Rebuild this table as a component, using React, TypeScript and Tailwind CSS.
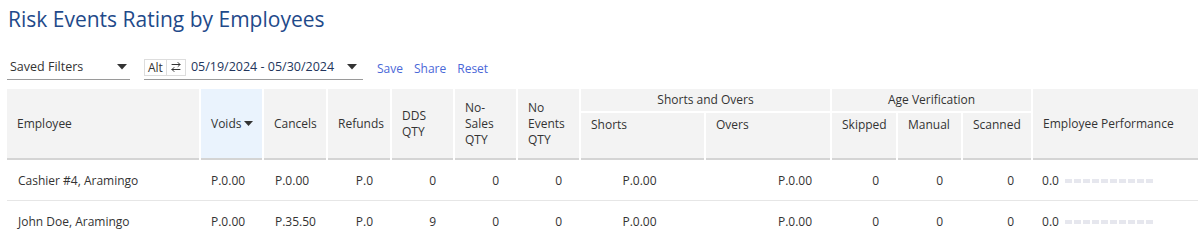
import React from "react";
import { ArrowRightLeft } from "lucide-react";

const font = { fontFamily: '"Open Sans", "Liberation Sans", sans-serif' };

type Row = {
  name: string;
  voids: string;
  cancels: string;
  refunds: string;
  dds: string;
  nosales: string;
  noevents: string;
  shorts: string;
  overs: string;
  skipped: string;
  manual: string;
  scanned: string;
  perf: string;
};

const rows: Row[] = [
  { name: "Cashier #4, Aramingo", voids: "P.0.00", cancels: "P.0.00", refunds: "P.0", dds: "0", nosales: "0", noevents: "0", shorts: "P.0.00", overs: "P.0.00", skipped: "0", manual: "0", scanned: "0", perf: "0.0" },
  { name: "John Doe, Aramingo", voids: "P.0.00", cancels: "P.35.50", refunds: "P.0", dds: "9", nosales: "0", noevents: "0", shorts: "P.0.00", overs: "P.0.00", skipped: "0", manual: "0", scanned: "0", perf: "0.0" },
];

function Caret() {
  return (
    <svg width="10" height="6" viewBox="0 0 10 6" className="shrink-0">
      <path d="M0 0 L10 0 L5 5.5 Z" fill="#333" />
    </svg>
  );
}

function Bar() {
  return (
    <div className="flex gap-[2px] ml-[6px]">
      {Array.from({ length: 10 }).map((_, i) => (
        <div key={i} className="w-[7px] h-[4px] bg-[#e6e7ee]" />
      ))}
    </div>
  );
}

export default function App() {
  const th = "font-normal text-left align-middle border-r-2 border-white px-[10px]";
  return (
    <div className="w-[1198px] h-[249px] overflow-hidden bg-white text-[#333]" style={font}>
      <h1 className="pl-[8px] pt-[4px] text-[21px] leading-[30px] text-[#1f4a8a]">Risk Events Rating by Employees</h1>
      <div className="flex items-end pl-[7px] mt-[21px] h-[25px] text-[12.5px]">
        <div className="w-[123px] h-[25px] border-b border-[#9a9a9a] flex items-center justify-between pl-[3px] pr-[3px]">
          <span>Saved Filters</span>
          <Caret />
        </div>
        <div className="ml-[14px] w-[219px] h-[25px] border-b border-[#9a9a9a] flex items-center pr-[6px]">
          <div className="flex items-center border border-[#ddd] h-[17px]">
            <span className="px-[3px] text-[12px] leading-[15px] text-[#333] border-r border-[#ddd]">Alt</span>
            <span className="px-[3px] flex items-center">
              <ArrowRightLeft size={12} strokeWidth={2} color="#333" />
            </span>
          </div>
          <span className="ml-[5px] text-[#23355c]">05/19/2024 - 05/30/2024</span>
          <span className="ml-auto"><Caret /></span>
        </div>
        <div className="flex gap-[11px] ml-[14px] mb-[2px] text-[12px] text-[#4a68d8]">
          <span>Save</span>
          <span>Share</span>
          <span>Reset</span>
        </div>
      </div>
      <div className="pl-[7px] mt-[9px]">
        <table className="table-fixed border-collapse w-[1191px] text-[12px] leading-[16px]">
          <colgroup>
            <col className="w-[193px]" />
            <col className="w-[63px]" />
            <col className="w-[64px]" />
            <col className="w-[64px]" />
            <col className="w-[63px]" />
            <col className="w-[63px]" />
            <col className="w-[63px]" />
            <col className="w-[125px]" />
            <col className="w-[126px]" />
            <col className="w-[66px]" />
            <col className="w-[65px]" />
            <col className="w-[70px]" />
            <col className="w-[166px]" />
          </colgroup>
          <thead className="bg-[#f3f3f3] text-[#333]">
            <tr className="h-[23px]">
              <th rowSpan={2} className={th}>Employee</th>
              <th rowSpan={2} className={`${th} bg-[#eaf3fd]`}>
                <span className="inline-flex items-center gap-[3px]">Voids
                  <svg width="9" height="5" viewBox="0 0 9 5"><path d="M0 0 L9 0 L4.5 5 Z" fill="#333" /></svg>
                </span>
              </th>
              <th rowSpan={2} className={th}>Cancels</th>
              <th rowSpan={2} className={th}>Refunds</th>
              <th rowSpan={2} className={th}>DDS<br />QTY</th>
              <th rowSpan={2} className={th}>No-<br />Sales<br />QTY</th>
              <th rowSpan={2} className={th}>No<br />Events<br />QTY</th>
              <th colSpan={2} className="font-normal text-center border-r-2 border-b-2 border-white">Shorts and Overs</th>
              <th colSpan={3} className="font-normal text-center border-r-2 border-b-2 border-white">Age Verification</th>
              <th rowSpan={2} className="font-normal text-left px-[10px]">Employee Performance</th>
            </tr>
            <tr className="h-[47px] border-b-2 border-[#d4d4d4]">
              <th className={`${th} align-top pt-[4px]`}>Shorts</th>
              <th className={`${th} align-top pt-[4px]`}>Overs</th>
              <th className={`${th} align-top pt-[4px]`}>Skipped</th>
              <th className={`${th} align-top pt-[4px]`}>Manual</th>
              <th className={`${th} align-top pt-[4px]`}>Scanned</th>
            </tr>
          </thead>
          <tbody>
            {rows.map((r, i) => {
              const td = `px-[18px] pt-[3px] h-[41px] ${i < rows.length - 1 ? "border-b border-[#e6e6e6]" : ""}`;
              return (
                <tr key={r.name}>
                  <td className={`${td} pl-[11px] text-left`}>{r.name}</td>
                  <td className={`${td} pl-[11px] text-left`}>{r.voids}</td>
                  <td className={`${td} pl-[12px] text-left`}>{r.cancels}</td>
                  <td className={`${td} text-right`}>{r.refunds}</td>
                  <td className={`${td} text-right`}>{r.dds}</td>
                  <td className={`${td} text-right`}>{r.nosales}</td>
                  <td className={`${td} text-right`}>{r.noevents}</td>
                  <td className={`${td} text-center pr-[24px]`}>{r.shorts}</td>
                  <td className={`${td} text-right pr-[19px]`}>{r.overs}</td>
                  <td className={`${td} text-right`}>{r.skipped}</td>
                  <td className={`${td} text-right pr-[19px]`}>{r.manual}</td>
                  <td className={`${td} text-right`}>{r.scanned}</td>
                  <td className={`${td} pl-[10px]`}>
                    <div className="flex items-center">
                      <span>{r.perf}</span>
                      <Bar />
                    </div>
                  </td>
                </tr>
              );
            })}
          </tbody>
        </table>
      </div>
    </div>
  );
}
